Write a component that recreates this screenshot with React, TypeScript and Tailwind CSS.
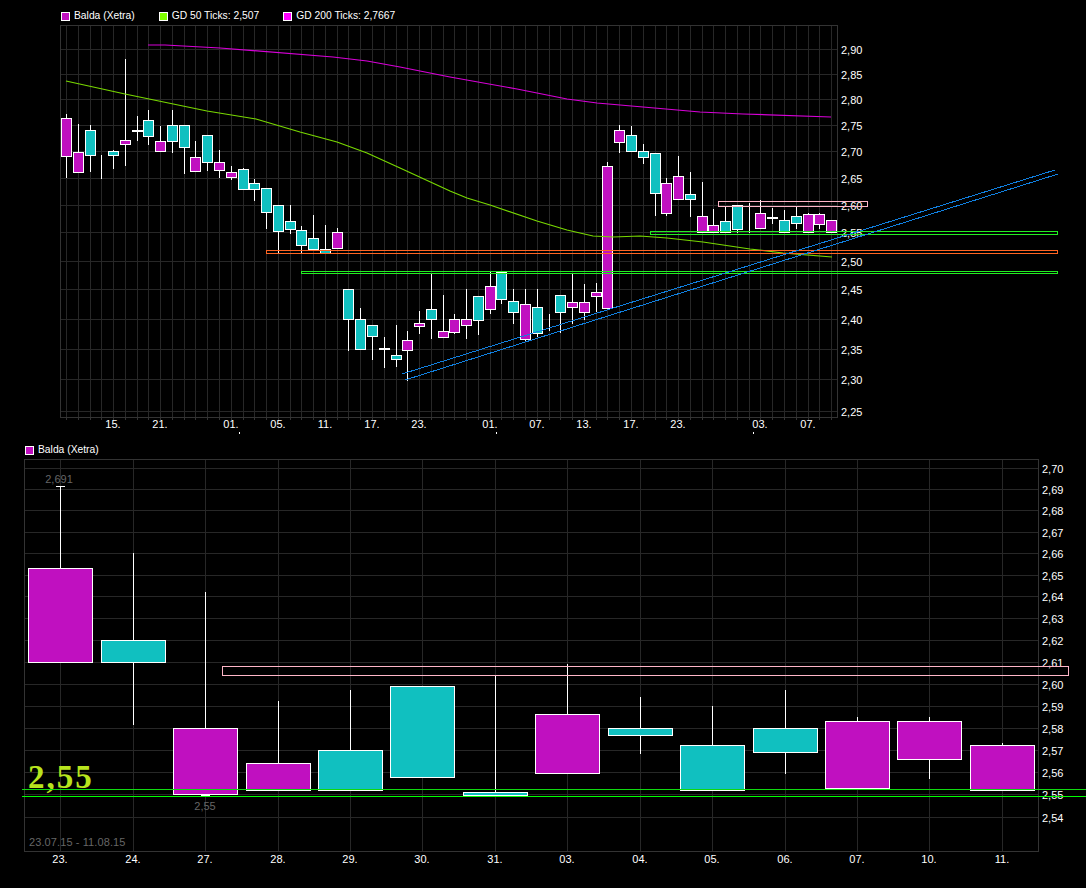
import React from "react";

type Candle = [number, number, number, number, boolean];

// body top, body bottom, wick high, wick low, isPurple
const topCandles: Candle[] = [
  [118, 156, 114, 177, true], [152, 172, 124, 172, true], [130, 155, 125, 171, false], [155, 155, 155, 178, false],
  [151, 155, 150, 168, false], [140, 144, 59, 165, true], [130, 131, 116, 140, false], [120, 136, 110, 144, false],
  [141, 151, 126, 151, true], [125, 141, 110, 152, false], [125, 147, 125, 173, false], [157, 171, 141, 171, true],
  [135, 162, 135, 170, false], [162, 170, 150, 177, true], [172, 177, 166, 179, true], [169, 189, 168, 189, false],
  [183, 189, 179, 200, false], [188, 212, 188, 228, false], [205, 231, 205, 252, false], [221, 229, 205, 233, false],
  [230, 245, 226, 253, false], [238, 249, 215, 249, false], [249, 253, 225, 253, false], [232, 248, 228, 248, true],
  [289, 319, 289, 350, false], [319, 349, 308, 349, false], [325, 336, 325, 359, false], [348, 349, 337, 367, false],
  [355, 359, 325, 366, false], [340, 350, 331, 380, true], [323, 326, 311, 333, true], [309, 319, 274, 338, false],
  [331, 337, 295, 337, true], [319, 332, 314, 333, true], [319, 325, 289, 338, true], [296, 320, 296, 334, false],
  [286, 309, 272, 313, true], [272, 299, 272, 303, false], [301, 312, 289, 323, false], [304, 339, 289, 341, true],
  [307, 333, 289, 336, false], [330, 330, 314, 330, false], [295, 312, 295, 332, false], [302, 307, 274, 323, true],
  [302, 312, 284, 319, true], [292, 296, 283, 311, true], [166, 308, 162, 309, true], [130, 142, 125, 152, true],
  [135, 151, 126, 151, false], [151, 157, 144, 163, false], [153, 193, 153, 215, false], [183, 213, 178, 215, true],
  [176, 199, 156, 199, true], [194, 199, 172, 216, false], [216, 232, 182, 232, true], [225, 232, 209, 232, true],
  [221, 232, 207, 232, false], [205, 229, 205, 232, false], [232, 232, 203, 232, false], [213, 228, 200, 228, true],
  [217, 218, 208, 223, false], [220, 232, 210, 232, false], [216, 223, 207, 228, false], [214, 232, 213, 232, true],
  [214, 224, 213, 228, true], [220, 232, 220, 232, true],
];

const bottomCandles: Candle[] = [
  [568, 662, 486, 662, true], [640, 662, 553, 724, false], [728, 794, 592, 795, true], [763, 790, 701, 790, true],
  [750, 790, 690, 790, false], [686, 777, 686, 777, false], [792, 795, 676, 795, false], [714, 773, 664, 773, true],
  [728, 735, 697, 753, false], [745, 790, 706, 790, false], [728, 752, 690, 773, false], [721, 788, 717, 788, true],
  [721, 759, 717, 778, true], [745, 790, 743, 790, true],
];

const topX = topCandles.map((_, i) => Math.round(66 + 11.77 * i));
const bottomX = [60, 133, 205, 278, 350, 422, 495, 567, 640, 712, 785, 857, 929, 1002];

const topRows: [number, string][] = [
  [49, "2,90"], [74, "2,85"], [99, "2,80"], [125, "2,75"], [151, "2,70"], [178, "2,65"], [205, "2,60"],
  [232, "2,55"], [261, "2,50"], [289, "2,45"], [319, "2,40"], [349, "2,35"], [379, "2,30"], [411, "2,25"],
];
const bottomRows: [number, string][] = [
  [468, "2,70"], [489, "2,69"], [510, "2,68"], [532, "2,67"], [553, "2,66"], [575, "2,65"], [596, "2,64"], [618, "2,63"],
  [640, "2,62"], [662, "2,61"], [684, "2,60"], [706, "2,59"], [728, "2,58"], [750, "2,57"], [772, "2,56"], [794, "2,55"], [817, "2,54"],
];
const topDates: [number, string][] = [
  [113, "15."], [160, "21."], [231, "01."], [278, "05."], [325, "11."], [372, "17."], [419, "23."],
  [490, "01."], [537, "07."], [584, "13."], [631, "17."], [678, "23."], [760, "03."], [808, "07."],
];
const bottomDates = ["23.", "24.", "27.", "28.", "29.", "30.", "31.", "03.", "04.", "05.", "06.", "07.", "10.", "11."];

const ma50 = "66,81 125,94 207,111 256,119 300,132 337,142 367,153 400,168 450,191 467,198 490,205 537,221 567,230 593,236 613,237 640,236 667,238 703,242 750,249 783,253 832,257";
const ma200 = "148,45 165,45 220,48 333,57 367,61 400,67 450,77 517,89 567,99 597,103 643,107 700,112 743,114 831,117";

const PURPLE = "#c010c0";
const TEAL = "#10c0c0";
const GRID = "#272727";
const AXIS = "#333333";

function Legend({ color, label }: { color: string; label: string }) {
  return (
    <div className="flex items-center gap-[4px]">
      <span className="block w-[9px] h-[9px] border border-white" style={{ backgroundColor: color }} />
      <span className="text-[10.3px] leading-none text-white whitespace-nowrap">{label}</span>
    </div>
  );
}

function Candles({ data, xs, half }: { data: Candle[]; xs: number[]; half: number }) {
  return (
    <g shapeRendering="crispEdges">
      {data.map(([top, bottom, high, low, purple], i) => (
        <g key={i}>
          <line x1={xs[i] + 0.5} x2={xs[i] + 0.5} y1={high} y2={low + 1} stroke="#fff" />
          <rect
            x={xs[i] - half + 0.5}
            y={top + 0.5}
            width={half * 2}
            height={Math.max(bottom - top, 0)}
            fill={purple ? PURPLE : TEAL}
            stroke="#fff"
          />
        </g>
      ))}
    </g>
  );
}

function Grid({ left, right, top, bottom, rows, cols }: { left: number; right: number; top: number; bottom: number; rows: number[]; cols: number[] }) {
  return (
    <g shapeRendering="crispEdges">
      {rows.map((y) => (
        <rect key={y} x={left} y={y} width={right - left} height={1} fill={GRID} />
      ))}
      {cols.map((x) => (
        <rect key={x} x={x} y={top} width={1} height={bottom - top} fill={GRID} />
      ))}
      <rect x={left + 0.5} y={top + 0.5} width={right - left} height={bottom - top} fill="none" stroke={AXIS} />
    </g>
  );
}

function Level({ x, w, y, h, color }: { x: number; w: number; y: number; h: number; color: string }) {
  return <rect x={x + 0.5} y={y + 0.5} width={w} height={h} fill="none" stroke={color} shapeRendering="crispEdges" />;
}

export default function App() {
  return (
    <div className="w-[1086px] h-[888px] bg-black overflow-hidden font-['Liberation_Sans',Arial,sans-serif]">
      <section className="flex flex-col">
        <div className="h-[25px] pl-[61px] pt-[8px] flex items-center gap-[24px]">
          <Legend color={PURPLE} label="Balda (Xetra)" />
          <Legend color="#80ff00" label="GD 50 Ticks: 2,507" />
          <Legend color="#ff00ff" label="GD 200 Ticks: 2,7667" />
        </div>
        <svg width={1086} height={416} viewBox="0 25 1086 416" className="block">
          <Grid left={60} right={837} top={25} bottom={417} rows={topRows.map((r) => r[0])} cols={topX} />
          <g stroke={AXIS} shapeRendering="crispEdges">
            {topX.map((x) => (
              <line key={x} x1={x + 0.5} x2={x + 0.5} y1={417} y2={420} />
            ))}
          </g>
          <g className="text-[11px] fill-white">
            {topRows.map(([y, label]) => (
              <text key={label} x={841} y={y + 5}>{label}</text>
            ))}
            {topDates.map(([x, label]) => (
              <text key={x} x={x} y={428} textAnchor="middle">{label}</text>
            ))}
          </g>
          <g fill="#fff" shapeRendering="crispEdges">
            <rect x={239} y={432} width={1} height={2} />
            <rect x={496} y={432} width={1} height={2} />
            <rect x={753} y={432} width={1} height={2} />
          </g>
          <Candles data={topCandles} xs={topX} half={5} />
          <polyline points={ma200} fill="none" stroke="#d800d8" strokeWidth={1.2} />
          <polyline points={ma50} fill="none" stroke="#78d800" strokeWidth={1.2} />
          <Level x={718} w={149} y={201} h={5} color="#ffb6c8" />
          <Level x={650} w={407} y={231} h={3} color="#22ee22" />
          <Level x={266} w={791} y={250} h={3} color="#ff6422" />
          <Level x={301} w={756} y={271} h={2} color="#22ee22" />
          <g stroke="#1080e0" shapeRendering="crispEdges">
            <line x1={402} y1={374} x2={1055} y2={170} />
            <line x1={405} y1={380} x2={1058} y2={174} />
          </g>
        </svg>
      </section>

      <section className="flex flex-col">
        <div className="h-[18px] pl-[25px] pt-[1px] flex items-center">
          <Legend color={PURPLE} label="Balda (Xetra)" />
        </div>
        <svg width={1086} height={429} viewBox="0 459 1086 429" className="block">
          <defs>
            <clipPath id="month-clip">
              <rect x={540} y={860} width={60} height={10} />
            </clipPath>
          </defs>
          <Grid left={24} right={1038} top={459} bottom={851} rows={bottomRows.map((r) => r[0])} cols={bottomX} />
          <g className="text-[11px] fill-white">
            {bottomRows.map(([y, label]) => (
              <text key={label} x={1042} y={y + 5}>{label}</text>
            ))}
            {bottomDates.map((label, i) => (
              <text key={i} x={bottomX[i]} y={863} textAnchor="middle">{label}</text>
            ))}
            <text x={567} y={878} textAnchor="middle" clipPath="url(#month-clip)">Aug</text>
          </g>
          <Candles data={bottomCandles} xs={bottomX} half={32} />
          <g stroke="#fff" shapeRendering="crispEdges">
            <line x1={56} x2={65} y1={486.5} y2={486.5} />
            <line x1={201} x2={210} y1={795.5} y2={795.5} />
          </g>
          <g className="text-[11px] fill-[#666666]">
            <text x={59} y={483} textAnchor="middle">2,691</text>
            <text x={205} y={810} textAnchor="middle">2,55</text>
            <text x={29} y={846} className="tracking-[0.1px]">23.07.15 - 11.08.15</text>
          </g>
          <text x={28} y={788} className="text-[33px] font-bold tracking-[2px] fill-[#b8e41e] font-['Liberation_Serif',serif]">2,55</text>
          <Level x={222} w={846} y={666} h={9} color="#ffb6c8" />
          <g shapeRendering="crispEdges">
            <rect x={22} y={789} width={1064} height={1} fill="#10d810" />
            <rect x={22} y={796} width={1064} height={1} fill="#00ff00" />
          </g>
        </svg>
      </section>
    </div>
  );
}
